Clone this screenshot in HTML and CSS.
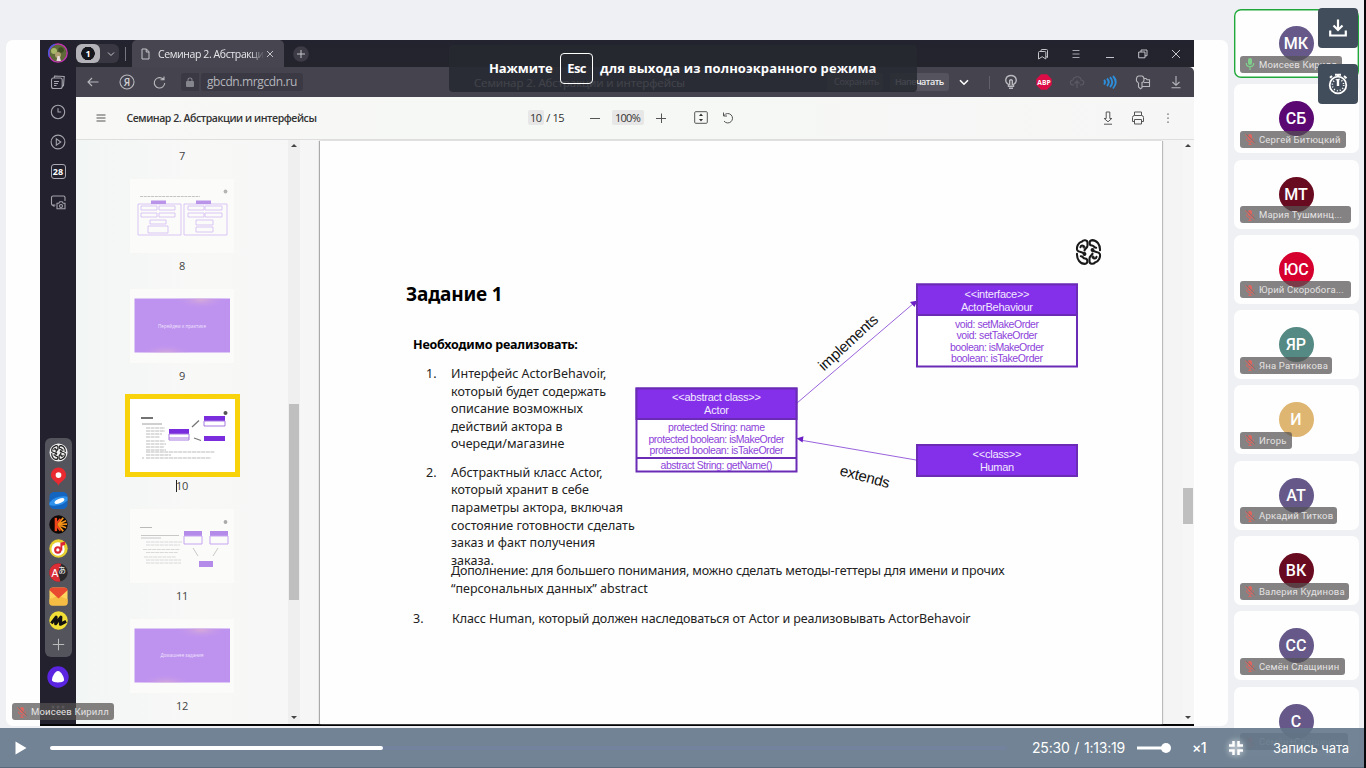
FILE: index.html
```html
<!DOCTYPE html>
<html lang="ru">
<head>
<meta charset="utf-8">
<title>Семинар 2. Абстракции и интерфейсы</title>
<link rel="stylesheet" href="styles.css">
</head>
<body>
<svg class="defs" width="0" height="0">
  <symbol id="mic-off" viewBox="0 0 12 12"><rect x="4" y="1" width="4" height="6" rx="2" fill="currentColor"/><path d="M2.500 5.500c0 4.600 7 4.600 7 0M6 9v2.400M4.300 11.400h3.400" fill="none" stroke="currentColor"/><path d="M2.200 1l9 9" stroke="#77706f" stroke-width="1"/><path d="M1.200 1.500l9.300 9.300" stroke="currentColor" stroke-width="1"/></symbol>
  <symbol id="brain" viewBox="0 0 26 26">
    <g id="brain-half" fill="none" stroke="currentColor" stroke-width="2.100" stroke-linecap="round"><path d="M12 5V3.800C12 .6 8 .6 6.500 2.500 2.500 3.500 1 8 1.600 10.800 2.700 14 7.500 12 9 15.200M12 5V6.500C12 9.500 9.300 9 9 11.500M5 8.200C5.200 6.200 7.800 6 8.400 7.700M1.500 14.800C1.200 20 4.500 24.900 9.300 24.900 12.900 24.500 12.500 19.600 9.500 19.500 7.200 19.400 7.500 17 5.300 17.200"/><circle cx="9" cy="15" r=".9"/><circle cx="8.500" cy="8" r=".5"/></g>
    <use href="#brain-half" transform="rotate(180 13 13)"/>
  </symbol>
</svg>
<div class="app">
  <main class="stage">
    <section class="screen">
      <aside class="rail">
        <svg class="r-ava" width="20" height="20" viewBox="0 0 20 20"><circle cx="10" cy="10" r="9.200" fill="#5e6b38" stroke="#c531b5" stroke-width="1.300"/><path d="M1.500 14A9.200 9.200 0 0 1 7 1.300" fill="none" stroke="#4a55e0" stroke-width="1.400"/><circle cx="6" cy="8" r="3" fill="#a8b868"/><circle cx="13" cy="7" r="2.800" fill="#3d4b20"/><circle cx="10" cy="12" r="3" fill="#b0a070"/><path d="M8.500 18l1-5h2l1.500 5z" fill="#e8dcd8"/></svg>
        <svg width="16" height="16" viewBox="0 0 16 16"><path d="M4.200 4L4.500 2 14.200 2.500 13.500 11.500 12 13M3.500 4h6.700q2 0 2 2v6.500q0 2-2 2H3.500q-2 0-2-2V6q0-2 2-2zM4 7.500h5M4 9.500h4M4 11.500h2.500"/></svg>
        <svg width="16" height="16" viewBox="0 0 16 16"><circle cx="8" cy="8" r="6.700"/><path d="M8 4.200V8h3.200"/></svg>
        <svg width="16" height="16" viewBox="0 0 16 16"><circle cx="8" cy="8" r="6.900"/><path d="M6.300 4.800v6.400L10.800 8z"/></svg>
        <span class="cal">28</span>
        <svg width="17" height="16" viewBox="0 0 17 16"><path d="M4.500 12.500L2.500 11.300q-1-.5-1-1.500V3.500q0-1.500 1.500-1.500h10.500q1.500 0 1.500 1.500V7M1.500 11h4"/><path d="M7 9.200h1.800l1-1.400h2.400l1 1.400H15v5.600H7z"/><circle cx="11" cy="12" r="1.500"/></svg>
        <div class="dock">
          <svg viewBox="0 0 20 20"><circle cx="10" cy="10" r="9.500" fill="#eee"/><use href="#brain" x="2" y="2" width="16" height="16" color="#222"/></svg>
          <svg viewBox="0 0 20 20"><path d="M10 20C9.500 16 2 14 2 8.500a8 8 0 0 1 16 0C18 14 10.500 16 10 20z" fill="#e92b31"/><circle cx="10" cy="8.500" r="3" fill="#fff"/></svg>
          <svg viewBox="0 0 20 20"><rect x=".5" y="1" width="19" height="18" rx="5" fill="#1465c0"/><path d="M.5 12Q8 4 19.500 6v4Q12 17 .5 15z" fill="#2f93ee"/><ellipse cx="11" cy="10.500" rx="5.500" ry="2.300" transform="rotate(-22 11 10.500)" fill="#fff"/></svg>
          <svg viewBox="0 0 20 20"><circle cx="10" cy="10" r="9.700" fill="#0d0805"/><path d="M6 3h2.500v14H6z" fill="#f0441a"/><path d="M9 10l6-7M9 10l9-4M9 10l10-.5M9 10l9 3.500M9 10l6 7" stroke="#f39119" stroke-width="1.800"/><path d="M7 10l5-6M7 10l5 6.500" stroke="#f0441a" stroke-width="2"/></svg>
          <svg viewBox="0 0 20 20"><circle cx="10" cy="10" r="9.700" fill="#e6cf2f"/><circle cx="9.500" cy="10.500" r="7" fill="#fff"/><circle cx="9.300" cy="11.500" r="2.800" fill="none" stroke="#dc2732" stroke-width="2.200"/><path d="M12 12V4l5-1.500V6l-3 1v5z" fill="#dc2732"/></svg>
          <svg viewBox="0 0 20 20"><circle cx="10" cy="10" r="9.700" fill="#29282b"/><path d="M13 .8A9.700 9.700 0 1 0 12 19.500L9.500 10z" fill="#dc2d35"/><text x="2.500" y="14.500" font-size="11" font-family="Liberation Sans" fill="#fff">A</text><text x="9.700" y="10.500" font-size="8" font-family="Noto Sans CJK JP" fill="#fff">あ</text></svg>
          <svg viewBox="0 0 20 20"><rect x=".5" y=".5" width="19" height="19" rx="4" fill="#ffd45e"/><path d="M.5 13L10 9l9.500 4V17q0 2.500-3 2.500h-13q-3 0-3-2.500z" fill="#f5bd43"/><path d="M.5 3.500Q1 .5 4 .5h12q3 0 3.500 3L10 12z" fill="#e8492f"/></svg>
          <svg viewBox="0 0 20 20"><circle cx="10" cy="10" r="9.700" fill="#f1df35"/><path d="M2.500 13L7.500 6.500 7 13.500 12.500 6.500 12 14l6-3" fill="none" stroke="#111" stroke-width="3.200" stroke-linejoin="round"/></svg>
          <svg viewBox="0 0 20 20"><path d="M10 4v12M4 10h12" stroke="#bbb" stroke-width="1.100"/></svg>
        </div>
        <svg class="alice" width="22" height="22" viewBox="0 0 22 22"><circle cx="11" cy="11" r="10.700" fill="#5a24e0"/><path d="M11 5c3 0 6.500 6.500 6 9.500-.6 2.500-11.400 2.500-12 0C4.500 11.500 8 5 11 5z" fill="#fff"/></svg>
        <svg class="dots" width="14" height="4" viewBox="0 0 14 4"><circle cx="2" cy="2" r="1.500"/><circle cx="7" cy="2" r="1.500"/><circle cx="12" cy="2" r="1.500"/></svg>
      </aside>
      <div class="browser">
        <div class="tabs">
          <div class="count"><b>1</b><svg width="8" height="6" viewBox="0 0 8 6"><path d="M1 1.500l3 3 3-3"/></svg></div>
          <i class="tsep"></i>
          <div class="tab">
            <svg width="9" height="12" viewBox="0 0 9 12"><path d="M1 1h4.500L8 3.800V11H1zM5.200 1v3H8"/></svg>
            <span class="tabname">Семинар 2. Абстракции</span>
            <svg width="8" height="8" viewBox="0 0 8 8"><path d="M1 1l6 6M7 1L1 7"/></svg>
          </div>
          <svg class="newtab" width="16" height="16" viewBox="0 0 16 16"><circle cx="8" cy="8" r="7.800"/><path d="M8 4v8M4 8h8"/></svg>
          <div class="winbtns">
            <svg width="12" height="12" viewBox="0 0 12 12"><path d="M4 3V2.500q0-1 1-1h4.500q1 0 1 1V9.500l-1.700-1M2.500 3.500h5.300q1 0 1 1V11L5.200 8.700 1.500 11V4.500q0-1 1-1z"/></svg>
            <svg width="12" height="12" viewBox="0 0 12 12"><path d="M2.500 2.500h7M2.500 6h7M2.500 9.500h7" opacity=".8"/></svg>
            <svg width="12" height="12" viewBox="0 0 12 12"><path d="M2 9.500h8"/></svg>
            <svg width="12" height="12" viewBox="0 0 12 12"><path d="M1.700 4h6.300v5.800H1.700zM4 4V2h6v5.800H8"/></svg>
            <svg width="12" height="12" viewBox="0 0 12 12"><path d="M2 2l8 8M10 2l-8 8"/></svg>
          </div>
        </div>
        <div class="address">
          <svg class="back" width="12" height="12" viewBox="0 0 12 12"><path d="M11.500 6H1M5 2L1 6l4 4"/></svg>
          <svg class="ya" width="16" height="16" viewBox="0 0 16 16"><circle cx="8" cy="8" r="7"/><text x="4.800" y="11.500" font-size="10" font-weight="600" font-family="Open Sans">Я</text></svg>
          <svg class="reload" width="13" height="13" viewBox="0 0 13 13"><path d="M11.700 7A5.200 5.200 0 1 1 8.500 2L11 3.500M11 .5v3.200H7.500"/></svg>
          <span class="lock"><svg width="8" height="10" viewBox="0 0 8 10"><rect x="0" y="4" width="8" height="6" rx="1" fill="#85858d" stroke="none"/><path d="M2 4.500V3a2 2 0 0 1 4 0v1.500" stroke="#85858d"/></svg></span>
          <span class="url">gbcdn.mrgcdn.ru</span>
          <span class="ptitle">Семинар 2. Абстракции и интерфейсы</span>
          <span class="btn save">Сохранить</span>
          <span class="btn print">Напечатать</span>
          <svg class="chev" width="10" height="7" viewBox="0 0 10 7"><path d="M1 1.200l4 4 4-4"/></svg>
          <i class="asep"></i>
          <div class="ext">
            <svg width="16" height="16" viewBox="0 0 16 16"><path d="M5.500 12.200V10.500C.5 7 3 1.500 8 1.500s7.500 5.500 2.500 9v1.700zM6 14.300h4M6.700 11V6.500q1.300-1.500 2.600 0V11" stroke-width="1.400"/></svg>
            <svg width="16" height="16" viewBox="0 0 16 16"><path d="M5 .3h6L15.700 5v6L11 15.700H5L.3 11V5z" fill="#dc0c46" stroke="none"/><text x="1.300" y="10.700" textLength="13.400" lengthAdjust="spacingAndGlyphs" font-size="7.500" font-weight="700" font-family="Open Sans" class="abp">ABP</text></svg>
            <svg width="16" height="16" viewBox="0 0 16 16"><path d="M5 11H4C0 10.500 1 6 4 6c1-4.500 8-4 8 0 4 0 3.500 5 0 5h-1M8 7v7M5.500 9.500L8 7l2.500 2.500" stroke="#5c5b66"/></svg>
            <svg width="16" height="16" viewBox="0 0 16 16"><path d="M2 6q2 2 0 4.500M5 4.500q3.500 3.500 0 7.500M8 3.200q4.500 5 0 10M11 2q5.500 6 0 12.500" stroke="#2d8edb" stroke-width="1.900"/></svg>
            <svg width="16" height="16" viewBox="0 0 16 16"><path d="M3 8.500C.5 7.500 1 2 4 2h3q2 .5 2 3.500T7 8.500v5.300L5.500 14.800 3.500 13V8.500M9 4.500h2l1 1.300h2.500v6.700H7.500M9 8.500h5.500"/></svg>
            <svg width="16" height="16" viewBox="0 0 16 16"><path d="M8 2v9M4.500 8L8 11.300 11.500 8M3.500 13.800h9"/></svg>
          </div>
        </div>
        <div class="pdfbar">
          <svg class="burger" width="10" height="8" viewBox="0 0 10 8"><path d="M.5 1h9M.5 4h9M.5 7h9"/></svg>
          <span class="doc">Семинар 2. Абстракции и интерфейсы</span>
          <span class="pg"><span class="cell">10</span><span> / 15</span></span>
          <svg class="minus" width="10" height="10" viewBox="0 0 10 10"><path d="M0 5.500h10"/></svg>
          <span class="cell zoomv">100%</span>
          <svg class="plus" width="10" height="10" viewBox="0 0 10 10"><path d="M0 5.500h10M5.500 .5v10"/></svg>
          <svg class="fit" width="14" height="13" viewBox="0 0 14 13"><rect x=".7" y=".7" width="12.600" height="11.600" rx="1"/><path d="M5 5l2-2.500L9 5zM5 8l2 2.500L9 8z" fill="#333" stroke="none"/></svg>
          <svg class="rot" width="12" height="12" viewBox="0 0 12 12"><path d="M2 3.500A4.700 4.700 0 1 1 2 9M1.500 0.500v3.500H5"/></svg>
          <div class="pdfright">
            <svg width="14" height="14" viewBox="0 0 14 14"><path d="M5.200 1h3.600v6.500h2L7 10.800 3.200 7.500h2zM3 13.200h8"/></svg>
            <svg width="14" height="14" viewBox="0 0 14 14"><path d="M3.500 4.500V1h7v3.500M3.500 10.500H1.500v-4q0-2 2-2h7q2 0 2 2v4h-2M3.500 8.500h7V13h-7z"/></svg>
            <svg width="14" height="14" viewBox="0 0 14 14"><path d="M7 2.500v1.300M7 6.500v1.300M7 10.500v1.300" stroke-width="1.300"/></svg>
          </div>
        </div>
        <div class="pdf">
          <nav class="thumbs">
            <div class="tlist">
              <span class="num first">7</span>
              <svg class="th" viewBox="0 0 104 74"><path d="M10 17.500h60" stroke="#c4c4c4" stroke-dasharray="3 .7"/><circle cx="95.500" cy="12.500" r="1.900" fill="#b5b5b5"/><g fill="none" stroke="#d6bff4" stroke-width=".9"><path d="M8 25h43v31H8zM54 25h43v31H54z"/><path d="M11 27h16v4H11zM29 27h16v4H29zM11 34h16v4H11zM29 34h16v4H29zM20 41h16v4H20zM18 47h20v7H18zM58 27h16v4H58zM75 27h17v4H75zM58 34h16v4H58zM75 34h17v4H75zM66 41h17v5H66zM66 48h17v5H66z"/></g><path d="M21 21.500h15v3.500H21zM66 21.500h15v3.500H66z" fill="#b994e8"/></svg>
              <span class="num">8</span>
              <svg class="th" viewBox="0 0 104 74"><use href="#cover"/><text x="52" y="38.500" text-anchor="middle" textLength="48" lengthAdjust="spacingAndGlyphs" class="ct">Перейдем к практике</text></svg>
              <span class="num">9</span>
              <svg class="th sel" viewBox="0 0 105 73"><circle cx="95.500" cy="14" r="2" fill="#555"/><g stroke="#aaa" stroke-width=".8" fill="none"><path d="M11 19h12" stroke="#444" stroke-width="1.500"/><path d="M12 25h20" stroke="#888"/><path d="M16 29h19M16 32h19M16 35h16M16 38h14M16 42h19M16 45h20M16 48h18M16 51h20M16 53h69M16 56h25M12 59h2M16 59h65" stroke-dasharray="4 .6"/><path d="M62 28l7-6.500M64 39l7 2.500" stroke="#777" stroke-width="1.300"/></g><path d="M39 30h20v5H39zM74 17h21v5H74zM74 37h21v5H74z" fill="#7a2ddd"/><path d="M39 35h20v6H39zM74 22h21v5H74zM39 39h20" fill="none" stroke="#a77ae0"/></svg>
              <span class="num cur">10</span>
              <svg class="th" viewBox="0 0 104 74"><circle cx="95.500" cy="13" r="1.900" fill="#aaa"/><g stroke="#d0d0d0" stroke-width=".8" fill="none"><path d="M10 18.500h12" stroke="#aaa"/><path d="M11 26.500h38M11 29h20" stroke="#bbb"/><path d="M16 33h36M16 36h34M13 40.500h37M16 43.500h32M14 48h32M16 51h35M16 54h35" stroke-dasharray="4 .6"/><path d="M63 39l5 8M88 39l-5 8" stroke="#bbb"/></g><path d="M54 22h18v5H54zM80 22h18v5H80zM69 52h14v6H69z" fill="#b58bea"/><path d="M54 27h18v8H54zM80 27h18v8H80z" fill="none" stroke="#c6a5f0"/></svg>
              <span class="num">11</span>
              <svg class="th" viewBox="0 0 104 74"><use href="#cover"/><text x="52" y="38" text-anchor="middle" textLength="43" lengthAdjust="spacingAndGlyphs" class="ct">Домашнее задание</text></svg>
              <span class="num">12</span>
            </div>
            <div class="sb"><i class="up"></i><i class="knob"></i><i class="down"></i></div>
          </nav>
          <div class="viewer">
            <article class="slide">
              <h1>Задание 1</h1>
              <h2>Необходимо реализовать:</h2>
              <div class="item"><span>1.</span><p>Интерфейс ActorBehavoir,<br>который будет содержать<br>описание возможных<br>действий актора в<br>очереди/магазине</p></div>
              <div class="item second"><span>2.</span><p>Абстрактный класс Actor,<br>который хранит в себе<br>параметры актора, включая<br>состояние готовности сделать<br>заказ и факт получения<br>заказа.</p></div>
              <p class="extra"><span class="tight">Дополнение: для большего понимания, можно сделать методы-геттеры для имени и прочих</span><br>“персональных данных” abstract</p>
              <div class="item third"><span>3.</span><p>Класс Human, который должен наследоваться от Actor и реализовывать ActorBehavoir</p></div>
              <svg class="diagram" width="500" height="270" viewBox="620 230 500 270">
                <use href="#brain" x="1075.500" y="239" width="26" height="26" color="#1a1a1a"/>
                <g stroke="#9a63dd" fill="none" stroke-width="1"><path d="M797 403L914 303M916 460L800 440"/></g>
                <path d="M917.500 300.500l-7.500 1.500 4.500 5zM796.500 438.500l7-2.300-.9 6.200z" fill="#6c1fc4"/>
                <g stroke="#6a2bb5" stroke-width="2">
                  <path d="M917 284.500h160v82H917zM636.500 388.500h160v83h-160z" fill="#fff"/>
                  <path d="M917 284.500h160v30.500H917zM636.500 388.500h160v30.500h-160zM917 445h160v31H917z" fill="#8430ea"/>
                  <path d="M637 458h160"/>
                </g>
                <g class="dh">
                  <text x="964.500" y="297.500" textLength="65">&lt;&lt;interface&gt;&gt;</text><text x="961" y="311" textLength="72">ActorBehaviour</text>
                  <text x="672" y="401" textLength="89">&lt;&lt;abstract class&gt;&gt;</text><text x="704" y="414" textLength="25">Actor</text>
                  <text x="972.500" y="458" textLength="49">&lt;&lt;class&gt;&gt;</text><text x="980" y="471" textLength="34">Human</text>
                </g>
                <g class="db">
                  <text x="955" y="327.500" textLength="84">void: setMakeOrder</text><text x="956.500" y="339" textLength="81">void: setTakeOrder</text><text x="950" y="350.500" textLength="94">boolean: isMakeOrder</text><text x="951" y="361.500" textLength="92">boolean: isTakeOrder</text>
                  <text x="668" y="431" textLength="97">protected String: name</text><text x="648.500" y="443" textLength="136">protected boolean: isMakeOrder</text><text x="649.500" y="454" textLength="134">protected boolean: isTakeOrder</text><text x="660.500" y="469" textLength="112">abstract String: getName()</text>
                </g>
                <g class="dl"><text transform="translate(824 371.500) rotate(-42.500)" textLength="75">implements</text><text transform="translate(839 475) rotate(15)" textLength="51">extends</text></g>
              </svg>
            </article>
            <div class="sb vsb"><i class="up"></i><i class="knob"></i><i class="down"></i></div>
          </div>
        </div>
      </div>
      <div class="esc"><span class="e1">Нажмите</span><kbd>Esc</kbd><span class="e2">для выхода из полноэкранного режима</span></div>
    </section>
    <div class="tag presenter"><svg><use href="#mic-off"/></svg>Моисеев Кирилл</div>
  </main>
  <aside class="people">
    <div class="tile on"><b class="ava violet">МК</b><div class="tag w1"><svg viewBox="0 0 12 12"><rect x="4" y="0" width="4" height="7" rx="2" fill="#7fd08a"/><path d="M2.200 5c0 4.800 7.600 4.800 7.600 0M6 9v3" fill="none" stroke="#7fd08a" stroke-width="1.200"/></svg>Моисеев Кирилл</div></div>
    <div class="tile"><b class="ava purple">СБ</b><div class="tag w2"><svg><use href="#mic-off"/></svg>Сергей Битюцкий</div></div>
    <div class="tile"><b class="ava maroon">МТ</b><div class="tag w3"><svg><use href="#mic-off"/></svg>Мария Тушминц...</div></div>
    <div class="tile"><b class="ava red">ЮС</b><div class="tag w4"><svg><use href="#mic-off"/></svg>Юрий Скоробога...</div></div>
    <div class="tile"><b class="ava teal">ЯР</b><div class="tag w5"><svg><use href="#mic-off"/></svg>Яна Ратникова</div></div>
    <div class="tile"><b class="ava sand">И</b><div class="tag w6"><svg><use href="#mic-off"/></svg>Игорь</div></div>
    <div class="tile"><b class="ava violet">АТ</b><div class="tag w7"><svg><use href="#mic-off"/></svg>Аркадий Титков</div></div>
    <div class="tile"><b class="ava maroon">ВК</b><div class="tag w8"><svg><use href="#mic-off"/></svg>Валерия Кудинова</div></div>
    <div class="tile"><b class="ava violet">СС</b><div class="tag w9"><svg><use href="#mic-off"/></svg>Семён Слащинин</div></div>
    <div class="tile"><b class="ava violet">С</b><div class="tag w10"><svg><use href="#mic-off"/></svg>Семён+Слащинин</div></div>
  </aside>
  <div class="tools">
    <button><svg width="20" height="20" viewBox="0 0 20 20"><path d="M10 1.500v10M5.500 7.500L10 12l4.500-4.500M2.200 12.500v5h15.600v-5" fill="none" stroke="#fff" stroke-width="2.200"/></svg></button>
    <button><svg width="22" height="22" viewBox="0 0 22 22" fill="none" stroke="#fff"><circle cx="11" cy="12" r="8.300" stroke-width="1.800"/><circle cx="11" cy="12" r="5.700" stroke-width="1.600" stroke-dasharray="1 1.985"/><path d="M11 6v7" stroke-width="2.400"/><path d="M8 1.800h6M11 2v2M3 4.800l2-1.800M17 3l2.500 2.300" stroke-width="2"/></svg></button>
  </div>
  <footer class="player">
    <svg class="play" width="12" height="14" viewBox="0 0 12 14"><path d="M.5 .5L11.500 7 .5 13.500z" fill="#fff"/></svg>
    <div class="track"><i class="done"></i></div>
    <span class="time">25:30 / 1:13:19</span>
    <svg class="vol" width="34" height="12" viewBox="0 0 34 12"><path d="M0 6h28" stroke="#fff" stroke-width="3"/><circle cx="29" cy="6" r="5" fill="#fff"/></svg>
    <span class="speed">×1</span>
    <svg class="full" width="14" height="14" viewBox="0 0 14 14"><path d="M0 4.500h4.500V0M9.500 0v4.500H14M0 9.500h4.500V14M9.500 14V9.500H14" fill="none" stroke="#fff" stroke-width="2.500"/></svg>
    <span class="chat">Запись чата</span>
  </footer>
</div>
<svg class="defs" width="0" height="0">
  <defs>
    <radialGradient id="glow"><stop offset="0" stop-color="#dfb3d0" stop-opacity=".7"/><stop offset="1" stop-color="#c092ef" stop-opacity="0"/></radialGradient>
    <symbol id="cover" viewBox="0 0 104 74" width="104" height="74"><path d="M4.500 9.500h95.500v54H4.500z" fill="#be93ef"/><svg x="4.500" y="9.500" width="95.500" height="54" viewBox="4.500 9.500 95.500 54"><ellipse cx="71" cy="11" rx="26" ry="9" fill="url(#glow)"/><ellipse cx="36" cy="64" rx="26" ry="9" fill="url(#glow)"/></svg></symbol>
  </defs>
</svg>
</body>
</html>
```
FILE: styles.css
```css
* { box-sizing: border-box; }
body { margin: 0; background: #eef0f3; font-family: "Open Sans", "Noto Sans", sans-serif; }
i { display: block; }
p, h1, h2 { margin: 0; }
.defs { position: absolute; }
.app { position: relative; width: 1366px; height: 768px; overflow: hidden; display: flex; border-right: 2px solid #08080a; }
.stage { position: relative; flex: none; width: 1222px; height: 686px; margin: 40px 6px 0 6px; padding-left: 34px; background: #fefefe; border-radius: 7px; }
.screen { position: relative; display: flex; width: 1154px; height: 686px; border-bottom: 2px solid #050505; background: #fff; }

/* browser side rail */
.rail { width: 36px; flex: none; background: #22212d; display: flex; flex-direction: column; align-items: center; padding-top: 3px; overflow: hidden; }
.rail > svg { flex: none; fill: none; stroke: #a4a4ac; stroke-width: 1.1; margin-bottom: 14px; }
.rail > svg.r-ava { margin-bottom: 11px; stroke: none; }
.cal { width: 15px; height: 15px; border: 1px solid #aaaab2; border-radius: 3px; color: #fff; font-size: 9px; font-weight: 700; line-height: 13px; text-align: center; margin-bottom: 15px; }
.dock { flex: none; display: flex; flex-direction: column; gap: 5px; align-items: center; width: 27px; height: 219px; margin-top: 214px; padding-top: 5px; border-radius: 6px; background: #54545d; }
.dock svg { width: 19px; height: 19px; flex: none; }
.rail > svg.alice { stroke: none; margin: 9px 0 17px; }
.rail > svg.dots { fill: #64646d; stroke: none; }

.browser { width: 1118px; display: flex; flex-direction: column; }
.tabs { height: 27px; flex: none; display: flex; background: linear-gradient(#23232f, #24242d); align-items: center; }
.tabs svg { fill: none; stroke: #c4c4ca; stroke-width: 1; flex: none; }
.count { display: flex; align-items: center; gap: 7px; width: 43px; height: 19px; border-radius: 6px; background: #393842; }
.count b { display: flex; width: 24px; height: 19px; border-radius: 6px; background: radial-gradient(circle, #15151d 0 6.5px, #b3b2b8 7px); color: #fff; font-size: 9px; align-items: center; justify-content: center; }
.tsep { width: 1px; height: 14px; background: #75757d; margin: 0 6px; }
.tab { display: flex; align-items: center; width: 152px; height: 27px; padding-left: 9px; background: #474650; border-radius: 5px 5px 0 0; color: #e6e6ea; }
.tabname { width: 105px; margin: 0 3px 0 8px; font-size: 10.5px; letter-spacing: -.4px; white-space: nowrap; -webkit-mask-image: linear-gradient(90deg, #000 88%, transparent 102%); }
.tabs .newtab { margin-left: 9px; fill: #3d3c46; }
.newtab circle { stroke: none; }
.winbtns { margin-left: auto; margin-right: 12px; display: flex; gap: 21.2px; }

.address { height: 30px; flex: none; display: flex; align-items: center; background: #45444e; color: #b5b5bb; border-top-right-radius: 5px; white-space: nowrap; }
.address svg { fill: none; stroke: #b8b8be; stroke-width: 1.1; flex: none; }
.address text { stroke: none; fill: #d0d0d4; }
.address text.abp { fill: #fff; }
.back { margin-left: 11px; }
.ya { margin-left: 20px; }
.reload { margin-left: 18px; }
.lock { flex: none; display: flex; justify-content: center; align-items: center; width: 18px; height: 18px; margin-left: 15px; background: #3a3944; border-radius: 3px 0 0 3px; }
.url { flex: none; width: 102px; height: 18px; margin-left: 2px; padding-left: 6px; background: #3a3944; border-radius: 3px; font-size: 12px; line-height: 18px; letter-spacing: -.4px; }
.ptitle { flex: none; width: 212px; margin-left: 171px; font-size: 11.5px; letter-spacing: -.12px; color: #e0e0e4; }
.btn { flex: none; height: 18px; line-height: 17px; border-radius: 3px; background: #55545e; }
.save { width: 56px; margin-left: 141px; padding-left: 7px; font-size: 9px; letter-spacing: -.25px; color: #e0e0e4; }
.print { width: 59px; margin-left: 7px; color: #f0f0f2; font-weight: 600; font-size: 9px; letter-spacing: -.5px; padding-left: 5px; }
.address .chev { margin-left: 10px; stroke: #fff; stroke-width: 1.6; }
.asep { width: 1px; height: 13px; background: #62616b; margin-left: 20px; }
.ext { display: flex; margin-left: auto; margin-right: 10px; gap: 17.1px; }

.pdfbar { height: 43px; flex: none; display: flex; align-items: center; background: linear-gradient(90deg, #f8f8f6, #f5f8f5 50%, #f7f6f6); border-bottom: 1px solid #dedede; font-size: 11px; color: #333; white-space: nowrap; padding-bottom: 1px; }
.pdfbar svg { fill: none; stroke: #555; stroke-width: 1; flex: none; }
.burger { margin-left: 20px; }
.doc { flex: none; margin-left: 20.5px; width: 191.5px; font-size: 10.5px; font-weight: 600; letter-spacing: -.44px; color: #333; }
.pg { margin-left: 210px; width: 36px; letter-spacing: -.5px; word-spacing: .3px; white-space: pre; }
.cell { background: #e8e7e7; border-radius: 2px; padding: 0 2px; }
.minus { margin-left: 25.5px; }
.zoomv { margin-left: 12px; width: 32px; text-align: center; letter-spacing: -.7px; }
.plus { margin-left: 12px; }
.fit { margin-left: 28px; }
.rot { margin-left: 14px; }
.pdfright { margin-left: auto; margin-right: 19px; display: flex; gap: 16px; }

.pdf { flex: 1; display: flex; min-height: 0; }
.thumbs { width: 242px; flex: none; display: flex; justify-content: space-between; background: linear-gradient(90deg, #f2f6f4, #f8f8f7 50%, #f7f6f6); padding-right: 18px; }
.tlist { width: 212px; display: flex; flex-direction: column; align-items: center; overflow: hidden; }
.th { width: 104px; height: 74px; flex: none; background: #fbfbfa; }
.th.sel { width: 115px; height: 83px; border: 5px solid #f8d30c; background: #fff; margin: -5px 0 -4px; }
.ct { font: 5.5px "Open Sans", sans-serif; fill: #f0e2fd; }
.num { flex: none; height: 36px; font-size: 11px; line-height: 26px; color: #444; letter-spacing: -.3px; }
.num.first { height: 39px; line-height: 32px; }
.cur::before { content: ""; display: inline-block; width: 1px; height: 12px; background: #222; vertical-align: -2px; margin-right: -1px; }
.sb { position: relative; width: 12px; display: flex; flex-direction: column; align-items: center; background: #f0efef; }
.up, .down { border: 3px solid transparent; width: 0; }
.up { border-top-width: 0; border-bottom-color: #444; margin-top: 4px; }
.down { border-bottom-width: 0; border-top-color: #444; margin: auto 0 5px; }
.knob { width: 10px; height: 196px; margin-top: 257px; background: #bfbfbf; }
.viewer { flex: 1; display: flex; background: #f5f4f4; padding-left: 2px; }
.slide { position: relative; width: 842px; height: 583px; margin-top: 1px; background: #fefefe; box-shadow: -1px 0 1px #aaa, 1px 0 1px #bbb; padding: 141px 0 0 86px; color: #222; font-family: "Noto Sans", sans-serif; }
.vsb { margin-left: auto; background: #f7f6f6; }
.vsb .knob { margin-top: 341px; height: 36px; }

.slide h1 { font-size: 19px; line-height: 24px; font-weight: 700; letter-spacing: -.2px; color: #000; }
.slide h2 { font-size: 12.5px; line-height: 18px; margin: 30px 0 11px 7px; letter-spacing: -.22px; color: #000; }
.slide p, .item > span { font-size: 12.5px; line-height: 17.6px; letter-spacing: 0; white-space: nowrap; }
.item { display: flex; padding-left: 20px; }
.item span { width: 25px; }
.second { margin-top: 10.8px; }
.slide .extra { margin: -7.2px 0 12.8px 45px; }
.tight { letter-spacing: -.17px; }
.third { padding-left: 7px; }
.third span { width: 39px; }
.slide .third p { letter-spacing: -.1px; }
.diagram { position: absolute; left: 300px; top: 89px; }
.diagram text { font-family: "Liberation Sans", sans-serif; }
.dh text { font-size: 11px; fill: #f3e8ff; }
.db text { font-size: 10.5px; fill: #8d43da; }
.dl text { font-size: 15px; fill: #111; }

.esc { position: absolute; left: 409px; top: 5px; width: 468px; height: 47px; display: flex; align-items: center; background: rgba(38, 41, 49, .86); border-radius: 4px; color: #fff; font-size: 13px; font-weight: 700; white-space: nowrap; padding-left: 40px; }
.esc kbd { width: 33px; height: 31px; border: 1px solid #fff; border-radius: 4px; font: inherit; line-height: 28px; text-align: center; margin: 0 7px 0 8px; letter-spacing: -.7px; }
.e1 { width: 63px; letter-spacing: -.1px; padding-bottom: 1px; }
.e2 { letter-spacing: .09px; padding-bottom: 1px; }

/* participants */
.people { width: 125px; flex: none; padding-top: 9px; display: flex; flex-direction: column; gap: 6.3px; }
.tile { position: relative; flex: none; height: 69px; border-radius: 7px; background: #fefefe; display: flex; align-items: center; justify-content: center; padding-right: 1px; }
.tile.on { box-shadow: inset 0 0 0 1.4px #21a83b; }
.ava { width: 35px; height: 35px; border-radius: 50%; color: #fff; display: flex; align-items: center; justify-content: center; font: 500 16px Roboto, sans-serif; }
.violet { background: #665989; }
.purple { background: #5b0872; }
.maroon { background: #690b20; }
.red { background: #d6002f; }
.teal { background: #558983; }
.sand { background: #dfb671; }
.tag { position: absolute; left: 6px; top: 46.5px; height: 17px; display: flex; align-items: center; gap: 3px; padding-left: 4px; border-radius: 3px; background: rgba(85, 82, 82, .72); color: #e4e2e2; font: 9.5px Roboto, sans-serif; letter-spacing: .18px; white-space: nowrap; }
.tag svg { width: 12px; height: 12px; color: #e0655f; flex: none; }
.presenter { top: 663px; width: 102px; }
.w1 { width: 102px; } .w2 { width: 106px; } .w3, .w4 { width: 111px; } .w5 { width: 92px; }
.w6 { width: 52px; } .w7 { width: 97px; } .w8 { width: 109px; } .w9 { width: 105px; } .w10 { width: 108px; }

.tools { position: absolute; left: 1318px; top: 8px; display: flex; flex-direction: column; gap: 16px; }
.tools button { width: 40px; height: 40px; border: 0; padding: 0; border-radius: 4px; background: #414d5a; display: flex; align-items: center; justify-content: center; }

.player { position: absolute; left: 0; top: 728px; width: 1364px; height: 40px; display: flex; align-items: center; background: rgba(99, 119, 138, .9); border-bottom: 1px solid #596a7b; color: #fff; font-family: Inter, sans-serif; white-space: nowrap; }
.play { margin-left: 15px; }
.track { width: 957px; height: 4px; margin-left: 23px; background: #73829d; border-radius: 2px; }
.done { width: 333px; height: 4px; border-radius: 2px; background: #fff; }
.time { width: 94px; margin-left: 25px; font-size: 14px; letter-spacing: -.2px; word-spacing: 1px; }
.vol { margin-left: 11px; }
.speed { width: 16px; margin-left: 21px; font-size: 14px; font-weight: 500; letter-spacing: -.5px; }
.full { margin-left: 21px; filter: drop-shadow(0 0 3px #fff); }
.chat { margin-left: 30px; font-size: 13px; letter-spacing: -.1px; }
```
